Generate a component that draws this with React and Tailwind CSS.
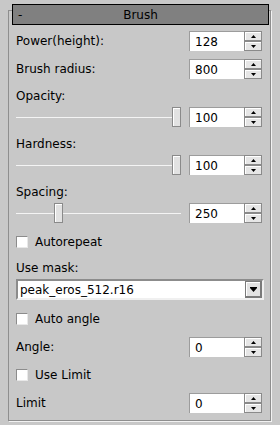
import React from "react";

const font = { fontFamily: '"DejaVu Sans", Verdana, sans-serif' };

function SpinBtn({ up }) {
  return (
    <div className="w-[18px] h-[10px] bg-[#e6e6e6] border border-[#8a8a8a] shadow-[inset_1px_1px_0_#ffffff] flex items-center justify-center">
      <svg width="5" height="3" viewBox="0 0 5 3">
        {up ? <path d="M2.5 0 L5 3 L0 3 Z" fill="#000" /> : <path d="M0 0 L5 0 L2.5 3 Z" fill="#000" />}
      </svg>
    </div>
  );
}

function Spin({ value }) {
  return (
    <div className="flex items-start mr-[2px]">
      <div className="w-[55px] h-[20px] bg-white border-t border-l border-[#9c9c9c] flex items-center pl-[5px] text-[12px] text-black leading-none">
        {value}
      </div>
      <div className="flex flex-col">
        <SpinBtn up />
        <SpinBtn />
      </div>
    </div>
  );
}

function LabelRow({ children, className = "" }) {
  return <div className={"h-[22px] flex items-center " + className}>{children}</div>;
}

function Slider({ pos, value }) {
  return (
    <div className="h-[20px] flex items-center justify-between">
      <div className="relative w-[165px] h-[20px] flex items-center">
        <div className="w-full h-px bg-[#f4f4f4]" />
        <div
          className="absolute top-0 w-[9px] h-[20px] bg-[#e2e2e2] border border-[#8a8a8a] shadow-[inset_1px_1px_0_#ffffff]"
          style={{ left: pos }}
        />
      </div>
      <Spin value={value} />
    </div>
  );
}

function Check({ label, className = "" }) {
  return (
    <LabelRow className={className}>
      <div className="w-[12px] h-[12px] bg-white border-t border-l border-[#8c8c8c] border-r border-b border-r-[#e8e8e8] border-b-[#e8e8e8]" />
      <span className="ml-[7px]">{label}</span>
    </LabelRow>
  );
}

function SpinRow({ label, value, className = "" }) {
  return (
    <div className={"h-[28px] flex items-center justify-between " + className}>
      <span>{label}</span>
      <Spin value={value} />
    </div>
  );
}

export default function App() {
  return (
    <div className="w-[280px] h-[425px] bg-[#c8c8c8] pt-[4px] text-[12px] text-black overflow-hidden" style={font}>
      <div className="relative z-10 ml-[12px] w-[257px] h-[21px] bg-[#808080] border border-black flex items-center">
        <span className="absolute left-[5px]">-</span>
        <span className="w-full text-center">Brush</span>
      </div>
      <div className="-mt-[15px] ml-[8px] w-[263px] border border-[#8e8e8e] shadow-[1px_1px_0_#f2f2f2] pt-[16px] pl-[7px] pr-[6px] pb-[3px] flex flex-col">
        <SpinRow label="Power(height):" value="128" />
        <SpinRow label="Brush radius:" value="800" />
        <LabelRow className="mt-[2px]">Opacity:</LabelRow>
        <Slider pos={156} value="100" />
        <LabelRow className="mt-[6px]">Hardness:</LabelRow>
        <Slider pos={156} value="100" />
        <LabelRow className="mt-[6px]">Spacing:</LabelRow>
        <Slider pos={38} value="250" />
        <Check label="Autorepeat" className="mt-[8px]" />
        <LabelRow className="mt-[4px]">Use mask:</LabelRow>
        <div className="h-[21px] bg-white border-2 border-t-[#8c8c8c] border-l-[#8c8c8c] border-r-[#f0f0f0] border-b-[#f0f0f0] flex items-center justify-between pl-[2px]">
          <span>peak_eros_512.r16</span>
          <div className="w-[17px] h-[17px] bg-[#e2e2e2] border border-[#7a7a7a] border-b-2 border-r-2 shadow-[inset_1px_1px_0_#ffffff] flex items-center justify-center">
            <svg width="7" height="5" viewBox="0 0 7 5">
              <path d="M0 0 H7 V1 H0 Z M0 1 L7 1 L3.5 5 Z" fill="#000" />
            </svg>
          </div>
        </div>
        <Check label="Auto angle" className="mt-[8px]" />
        <SpinRow label="Angle:" value="0" className="mt-[3px]" />
        <Check label="Use Limit" className="mt-[3px]" />
        <SpinRow label="Limit" value="0" className="mt-[3px]" />
      </div>
    </div>
  );
}
